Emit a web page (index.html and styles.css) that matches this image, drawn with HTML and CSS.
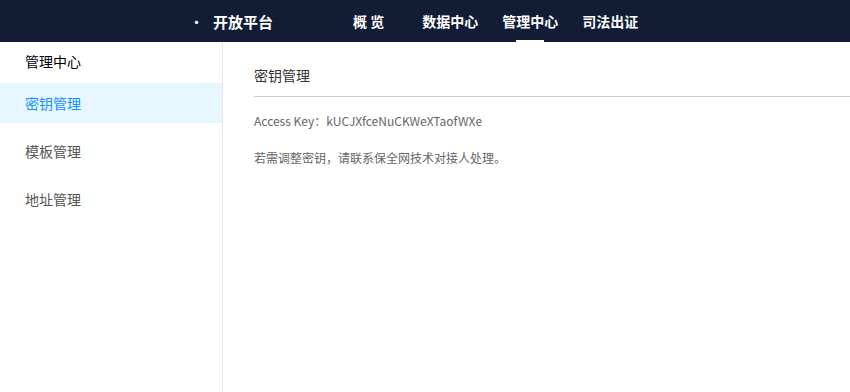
FILE: index.html
```html
<!DOCTYPE html>
<html lang="zh">
<head>
  <meta charset="UTF-8">
  <title>开放平台 - 密钥管理</title>
  <link rel="stylesheet" href="styles.css">
</head>
<body>
  <header class="topbar">
    <div class="brand"><span class="dot">·</span>开放平台</div>
    <nav class="nav">
      <a class="nav-item">概 览</a>
      <a class="nav-item">数据中心</a>
      <a class="nav-item active">管理中心</a>
      <a class="nav-item">司法出证</a>
    </nav>
  </header>

  <div class="layout">
    <aside class="sidebar">
      <div class="side-title">管理中心</div>
      <ul class="menu">
        <li class="menu-item selected">密钥管理</li>
        <li class="menu-item">模板管理</li>
        <li class="menu-item">地址管理</li>
      </ul>
    </aside>

    <main class="content">
      <h2 class="page-title">密钥管理</h2>
      <p class="info">Access Key：kUCJXfceNuCKWeXTaofWXe</p>
      <p class="info note">若需调整密钥，请联系保全网技术对接人处理。</p>
    </main>
  </div>
</body>
</html>
```

FILE: styles.css
```css
:root {
  --header-bg: #121c35;
  --primary: #1890ff;
  --active-bg: #e6f7ff;
  --text: #333;
  --text-light: #666;
  --border: #e8e8e8;
}

* {
  margin: 0;
  padding: 0;
  box-sizing: border-box;
}

body {
  font-family: "Noto Sans CJK SC", "Noto Sans", sans-serif;
  color: var(--text);
  background: #fff;
  height: 100vh;
  display: flex;
  flex-direction: column;
}

.topbar {
  height: 42px;
  background: var(--header-bg);
  color: #fff;
  display: flex;
  align-items: stretch;
}
.brand {
  margin-left: 189px;
  width: 164px;
  display: flex;
  align-items: center;
  font-size: 15px;
  font-weight: 700;
}
.dot {
  margin-right: 9px;
  font-weight: 400;
}
.nav {
  display: flex;
  gap: 24px;
}
.nav-item {
  position: relative;
  display: flex;
  align-items: center;
  font-size: 14px;
  font-weight: 700;
  cursor: pointer;
}
.nav-item:first-child {
  margin-right: 14px;
}
.nav-item.active::after {
  content: "";
  position: absolute;
  left: 50%;
  bottom: 0;
  width: 28px;
  height: 2px;
  margin-left: -14px;
  background: #fff;
}

.layout {
  flex: 1;
  display: flex;
}

.sidebar {
  width: 223px;
  border-right: 1px solid var(--border);
}
.side-title {
  padding: 9px 0 0 25px;
  height: 41px;
  font-size: 14px;
  color: #000;
}
.menu {
  list-style: none;
}
.menu-item {
  height: 40px;
  line-height: 40px;
  margin-bottom: 8px;
  padding-left: 25px;
  font-size: 14px;
  color: #555;
  cursor: pointer;
}
.menu-item.selected {
  background: var(--active-bg);
  color: var(--primary);
}

.content {
  flex: 1;
  padding-left: 31px;
}
.page-title {
  margin-top: 23px;
  padding-bottom: 11px;
  border-bottom: 1px solid #ccc;
  font-size: 14px;
  font-weight: 400;
  color: var(--text);
}
.info {
  margin-top: 15px;
  font-size: 12px;
  color: var(--text-light);
}
.note {
  margin-top: 20px;
}
```
